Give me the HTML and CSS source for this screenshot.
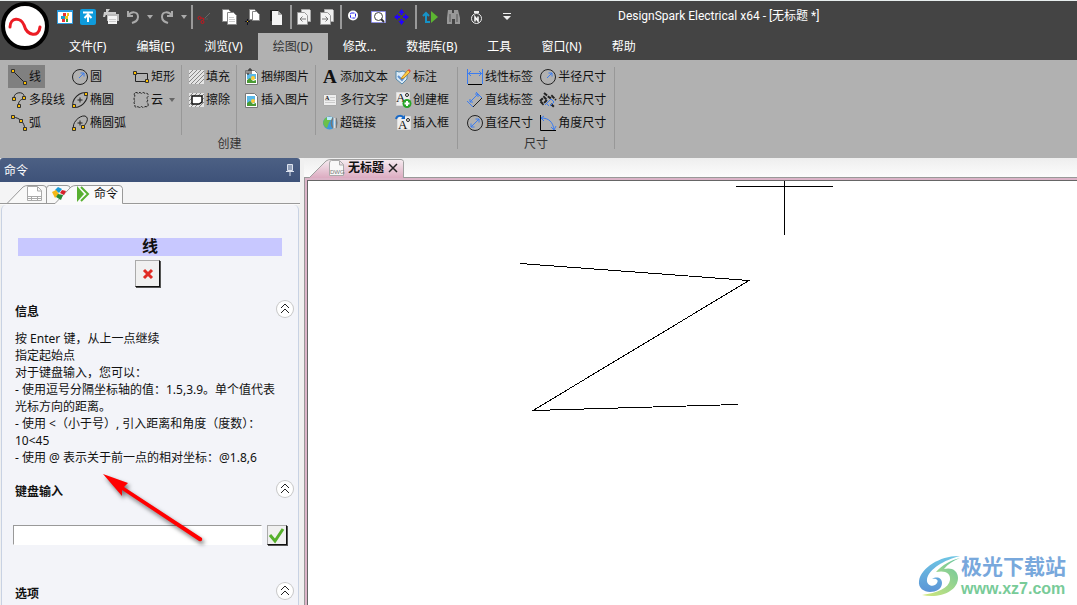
FILE: index.html
```html
<!DOCTYPE html>
<html lang="zh-CN">
<head>
<meta charset="utf-8">
<title>DesignSpark Electrical x64</title>
<link rel="stylesheet" href="styles.css">
</head>
<body>
<div class="app">
<header class="header">
  <button class="logo" aria-label="DesignSpark">
    <svg width="50" height="50" viewBox="0 0 50 50"><circle cx="25" cy="25" r="22" fill="#fff" stroke="#000" stroke-width="4"/><path d="M10 26C10 16 21 16 24 24C27 35 39 37 40 26" fill="none" stroke="#ec1c24" stroke-width="3" stroke-linecap="round"/></svg>
  </button>
  <div class="header-rows">
    <div class="quick">
      <div class="quick-group">
        <button class="tool" aria-label="项目"><svg viewBox="0 0 16 16"><path fill="#fff" stroke="#2a9be0" d="M.5 1.500h15v13H.5z"/><path fill="#2a9be0" d="M0 1h16v2H0z"/><path fill="#e33" d="M6 4h3v3H6zM5 10h3v3H5z"/><path fill="#18a0d0" d="M4 7h4v3H4z"/><path fill="#f5c518" d="M8 7h3v3H8zM10 4h2v3h-2z"/><path fill="#36a436" d="M9 10h2v3H9z"/></svg></button>
        <button class="tool" aria-label="上传"><svg viewBox="0 0 16 16"><rect width="16" height="16" rx="2" fill="#0f9bdc"/><path d="M3 3.500h10M8 13V7M4.500 9 8 5.500 11.500 9" fill="none" stroke="#fff" stroke-width="2"/></svg></button>
        <button class="tool" aria-label="打印"><svg viewBox="0 0 16 16"><path fill="#ccc" d="M3 0h4L5 3h8v3H3zM1 3h3L2 8H0z"/><path fill="#bbb" d="M4 5h12v7H4z"/><path fill="#f4f4f4" d="M5 7h9v8H5z"/><path stroke="#ccc" d="M6 10.500h7M6 12.500h7"/></svg></button>
        <button class="tool tool-undo" aria-label="撤销"><svg viewBox="0 0 14 16"><path fill="none" stroke="#aaa" stroke-width="2" d="M2 2v5h5M2 7c3-5 10-5 10 1 0 4-3 5-6 6"/></svg></button>
        <button class="tool tool-caret" aria-label="撤销列表"><svg viewBox="0 0 6 4"><path fill="#aaa" d="M0 0h6L3 4z"/></svg></button>
        <button class="tool tool-undo" aria-label="重做"><svg viewBox="0 0 14 16"><path fill="none" stroke="#aaa" stroke-width="2" d="M12 2v5H7M12 7C9 2 2 2 2 8c0 4 3 5 6 6"/></svg></button>
        <button class="tool tool-caret" aria-label="重做列表"><svg viewBox="0 0 6 4"><path fill="#aaa" d="M0 0h6L3 4z"/></svg></button>
      </div>
      <div class="quick-group quick-wide">
        <button class="tool" aria-label="剪切"><svg viewBox="0 0 16 16"><path d="m7 9 5-5" stroke="#666"/><path d="M6 10h4" stroke="#555"/><g fill="none" stroke="#c8141c"><circle cx="1.500" cy="9" r="1.500"/><circle cx="4.500" cy="13" r="1.500"/><path d="m3 9 3 .5-1 2"/></g></svg></button>
        <button class="tool" aria-label="复制"><svg viewBox="0 0 16 16"><path fill="#fff" stroke="#888" d="M.5.500h6l3 3v9h-9z"/><path fill="#fff" stroke="#888" d="M5.500 3.500h6l3 3v9h-9z"/><path d="M7 8.500h5M7 10.500h6M7 12.500h6" stroke="#ccc"/></svg></button>
        <button class="tool" aria-label="带基点复制"><svg viewBox="0 0 16 16"><path fill="#fff" stroke="#888" d="M3.500.500h5l3 3v7h-8z"/><path fill="#fff" stroke="#888" d="M6.500 2.500h4l3 3v6h-7z"/><path d="M1.500 10v6M-1 12.500h5" stroke="#112"/><path fill="#fc0" d="M1 12h1v1H1z"/></svg></button>
        <button class="tool" aria-label="粘贴"><svg viewBox="0 0 16 16"><path fill="#222" d="M0 1h8v2H2v9H0z"/><path fill="#f4f4f4" d="M2 2h6l4 4v10H2z"/><path fill="#aaa" d="m8 2 4 4H8z"/></svg></button>
      </div>
      <div class="quick-group">
        <button class="tool" aria-label="上一页"><svg viewBox="0 0 16 16"><path fill="#eee" stroke="#aaa" d="M4.500.500h8l1 1v11h-9z"/><path fill="#f4f4f4" stroke="#999" d="M.5 3.500h7l3 3v9H.5z"/><path fill="none" stroke="#777" d="M9 10H3M5.500 7.500 3 10l2.500 2.500"/></svg></button>
        <button class="tool" aria-label="下一页"><svg viewBox="0 0 16 16"><path fill="#eee" stroke="#aaa" d="M4.500.500h8l1 1v11h-9z"/><path fill="#f4f4f4" stroke="#999" d="M.5 3.500h7l3 3v9H.5z"/><path fill="none" stroke="#777" d="M2 10h6M5.500 7.500 8 10l-2.500 2.500"/></svg></button>
      </div>
      <div class="quick-group quick-wide">
        <button class="tool" aria-label="缩放"><svg viewBox="0 0 16 16"><circle cx="6" cy="6.500" r="5" fill="#fff"/><rect x="3.500" y="4" width="5" height="5" rx="1" fill="none" stroke="#22e" stroke-dasharray="3 1"/></svg></button>
        <button class="tool" aria-label="窗口缩放"><svg viewBox="0 0 16 16"><path fill="#fff" stroke="#88f" stroke-dasharray="2 1" d="M.5 2.500h14v11H.5z"/><circle cx="7.500" cy="7.500" r="4" fill="none" stroke="#444"/><path d="m10 10 3 3" stroke="#333" stroke-width="2"/></svg></button>
        <button class="tool" aria-label="平移"><svg viewBox="0 0 16 16"><path fill="#20f" d="m6.500 0 3 4h-6zm0 16 3-4h-6zM-1 8l4-3v6zm15 0-4-3v6z"/><path d="M6.500 4v2m0 4v2M3 8h2m3 0h2" stroke="#20f" stroke-width="2"/></svg></button>
      </div>
      <div class="quick-group quick-wide">
        <button class="tool" aria-label="更新"><svg viewBox="0 0 16 16"><path fill="none" stroke="#1693c8" stroke-width="2" d="M8 13H4V4M1 7l3-3 3 3"/><path fill="#5cb531" d="m9 2 7 6-7 6z"/></svg></button>
        <button class="tool" aria-label="查找"><svg viewBox="0 0 16 16"><path fill="#999" d="M2 1h4v3h2V1h4l2 8v6H9v-5H6v5H1V9z"/><path fill="#777" d="M3 5h2v8H3zM10 5h2v8h-2z"/></svg></button>
        <button class="tool" aria-label="标记"><svg viewBox="0 0 16 16"><circle cx="6.500" cy="9.500" r="5" fill="#444" stroke="#eee"/><path fill="#eee" d="M4 2h5v2H4z"/><path d="M5 12.500V8l3 4V7.500" fill="none" stroke="#fff" stroke-width="1.500"/></svg></button>
        <button class="tool tool-more" aria-label="自定义"><svg viewBox="0 0 10 8"><path fill="#eee" d="M1 0h8v1H1zM1 3h8L5 7z"/></svg></button>
      </div>
      <h1 class="title">DesignSpark Electrical x64 - [无标题 *]</h1>
    </div>
    <nav class="menu">
      <button class="menu-item">文件(F)</button>
      <button class="menu-item">编辑(E)</button>
      <button class="menu-item">浏览(V)</button>
      <button class="menu-item active">绘图(D)</button>
      <button class="menu-item">修改...</button>
      <button class="menu-item">数据库(B)</button>
      <button class="menu-item">工具</button>
      <button class="menu-item">窗口(N)</button>
      <button class="menu-item">帮助</button>
    </nav>
  </div>
</header>

<section class="ribbon">
  <div class="group">
    <div class="group-body">
      <div class="col">
        <button class="cmd selected"><svg class="icon" viewBox="0 0 18 18"><path class="k" d="m3 3 12 12"/><path class="dot" d="M1.500 1.500h3v3h-3zM13.500 13.500h3v3h-3z"/></svg>线</button>
        <button class="cmd"><svg class="icon" viewBox="0 0 18 18"><path class="k" d="M4 8C3 0 15 0 14 6c-1 3-7 3-5 9"/><path class="dot" d="M2.500 6.500h3v3h-3zM12.500 5.500h3v3h-3zM7.500 13.500h3v3h-3z"/></svg>多段线</button>
        <button class="cmd"><svg class="icon" viewBox="0 0 18 18"><path class="k" d="M3 3c7 1 11 5 12 12"/><path class="dot" d="M1.500 1.500h3v3h-3zM9.500 5.500h3v3h-3zM13.500 13.500h3v3h-3z"/></svg>弧</button>
      </div>
      <div class="col">
        <button class="cmd"><svg class="icon" viewBox="0 0 18 18"><circle class="k" cx="9" cy="9" r="7.500"/><path class="b" d="m8 10 5-5M9.500 5H13v3.500"/></svg>圆</button>
        <button class="cmd"><svg class="icon" viewBox="0 0 18 18"><ellipse class="k" cx="9" cy="9" rx="9" ry="5" transform="rotate(-45 9 9)"/><path class="k" d="M9 6.500v5M6.500 9h5"/><path class="dot" d="M1.500 13.500h3v3h-3zM13.500 1.500h3v3h-3z"/></svg>椭圆</button>
        <button class="cmd"><svg class="icon" viewBox="0 0 18 18"><path class="k" d="M3 15C0 10 8 1 14 2c5 2 1 8-2 11M9 6.500v5M6.500 9h5"/><path class="dot" d="M1.500 13.500h3v3h-3zM10.500 11.500h3v3h-3z"/></svg>椭圆弧</button>
      </div>
      <div class="col">
        <button class="cmd"><svg class="icon" viewBox="0 0 18 18"><path class="k" d="M3.500 5.500h12v8h-12z"/><path class="dot" d="M1.500 3.500h3v3h-3zM13.500 11.500h3v3h-3z"/></svg>矩形</button>
        <button class="cmd"><svg class="icon" viewBox="0 0 18 18"><path class="k" d="M3 5q-2-3 1-3.500 2 0 2 1 1.500-2 3.500 0 2-2 3.500 0 4-1 3 3-2 1.500 0 3.500-2 2 0 3.500 1 4-3 3-1.500 2-3.500 0-2 2-3.500 0-4 2-3-2-2-1.500 0-3.500-2-2 0-5z" stroke-dasharray="3 1"/></svg>云<svg class="drop" viewBox="0 0 6 4"><path fill="#666" d="M0 0h6L3 4z"/></svg></button>
      </div>
      <div class="rule"></div>
      <div class="col">
        <button class="cmd"><svg class="icon" viewBox="0 0 18 18"><path fill="#e4e4e4" d="M2 2h15v14H2z"/><path class="g" d="m2 6 4-4M2 10l8-8M2 14l12-12M4 16 17 3M8 16l9-9M12 16l5-5"/></svg>填充</button>
        <button class="cmd"><svg class="icon" viewBox="0 0 18 18"><path fill="#e4e4e4" d="M2 2h15v14H2z"/><path class="g" d="m2 6 4-4M2 10l8-8M2 14l12-12M4 16 17 3M8 16l9-9M12 16l5-5"/><path fill="#fff" stroke="#111" stroke-width="1.500" d="M5 5h10v6l-3 2H5z"/></svg>擦除</button>
      </div>
      <div class="rule"></div>
      <div class="col">
        <button class="cmd"><svg class="icon" viewBox="0 0 18 18"><path fill="#fff" stroke="#777" d="M3.500 2.500h9l3 3v11h-12z"/><path fill="#5ab9e8" d="M5 6h9v5H5z"/><path fill="#4a9b35" d="m5 12 3-2 3 3 3-1v3H5z"/><circle cx="11" cy="10" r="2" fill="#fc3"/><path class="k" d="M5 3v3h2V1h2v5"/></svg>捆绑图片</button>
        <button class="cmd"><svg class="icon" viewBox="0 0 18 18"><path fill="#fff" stroke="#777" d="M3.500 2.500h9l3 3v11h-12z"/><path fill="#5ab9e8" d="M5 5h8v7H5z"/><path fill="#4a9b35" d="m5 12 3-2 3 3 3-1v3H5z"/><circle cx="11" cy="10" r="2" fill="#fc3"/></svg>插入图片</button>
      </div>
      <div class="rule"></div>
      <div class="col">
        <button class="cmd"><svg class="icon" viewBox="0 0 18 18"><text class="serif heavy" x="2" y="15" font-size="19">A</text></svg>添加文本</button>
        <button class="cmd"><svg class="icon" viewBox="0 0 18 18"><path fill="#eee" stroke="#aaa" d="M2.500 3.500h13v11h-13z"/><path stroke="#ccc" d="M9 6.500h5M4 9.500h10M4 11.500h10"/><text class="serif heavy" x="4" y="9" font-size="6">A</text></svg>多行文字</button>
        <button class="cmd"><svg class="icon" viewBox="0 0 18 18"><circle cx="8.500" cy="9" r="6.500" fill="#3c98dc"/><path fill="#6bc04a" d="M3 6c3-5 8-2 6 1s-2 5-3 7C3 13 1 9 3 6z"/><path fill="#b9e9f8" d="M6 3h5v3H6z"/><path d="M12 4c-2 3-2 7 0 10M15 4c1 3 1 7 0 10" fill="none" stroke="#777" stroke-width="1.500"/><path d="M13.500 4v10" stroke="#ddd" stroke-width="2"/></svg>超链接</button>
      </div>
      <div class="col">
        <button class="cmd"><svg class="icon" viewBox="0 0 18 18"><path fill="#dcecf8" stroke="#58a" d="m2 3 3 1 4-1 4 2v6l-5 5-6-5z"/><path d="m4 8 4 4 4-5" fill="none" stroke="#5f92d0" stroke-width="2"/><path fill="#fc4" stroke="#a60" stroke-width=".6" d="m8 9 6-7 2 2-6 6-3 1z"/><path fill="#e44" d="m14 2 1-1 2 2-1 1z"/></svg>标注</button>
        <button class="cmd"><svg class="icon" viewBox="0 0 18 18"><path fill="#eee" stroke="#ddd" d="M2.500 1.500h13v13h-13z"/><text class="serif" x="2" y="11" font-size="13">A</text><circle cx="13" cy="4" r="1.500" class="k"/><circle cx="13" cy="12.500" r="4.500" fill="#27a527"/><path d="M13 10v5M10.500 12.500h5" stroke="#fff" stroke-width="2"/></svg>创建框</button>
        <button class="cmd"><svg class="icon" viewBox="0 0 18 18"><path fill="#eee" stroke="#ddd" d="M3.500 2.500h13v13h-13z"/><text class="serif" x="4" y="15" font-size="13">A</text><circle cx="14" cy="6" r="1.500" class="k"/><path d="M2 5c1-4 6-4 8-1" fill="none" stroke="#1668c7" stroke-width="2"/><path fill="#1668c7" d="M7 5h4V1z"/></svg>插入框</button>
      </div>
    </div>
    <h2 class="group-name">创建</h2>
  </div>
  <div class="rule tall"></div>
  <div class="group">
    <div class="group-body">
      <div class="col">
        <button class="cmd"><svg class="icon" viewBox="0 0 18 18"><path class="b" d="M1.500 1v15M16.500 1v15M2 5.500h14M5 3 2.500 5.500 5 8M13 3l2.500 2.500L13 8"/><path stroke="#000" d="M2 16.500h14"/></svg>线性标签</button>
        <button class="cmd"><svg class="icon" viewBox="0 0 18 18"><path class="b" d="m1 10 6 6M10 1l6 6M4 11l8-8M4 8v3h3M9 3h3v3"/><path class="k" d="m7 16 9-9"/></svg>直线标签</button>
        <button class="cmd"><svg class="icon" viewBox="0 0 18 18"><circle class="k" cx="9" cy="9" r="7.500"/><path class="b" d="m5 13 8-8M9.500 5H13v3.500M5 9.500V13h3.500"/></svg>直径尺寸</button>
      </div>
      <div class="col">
        <button class="cmd"><svg class="icon" viewBox="0 0 18 18"><circle class="k" cx="9" cy="9" r="7.500"/><path class="b" d="m8 10 5-5M9.500 5H13v3.500"/></svg>半径尺寸</button>
        <button class="cmd"><svg class="icon" viewBox="0 0 18 18"><path class="k heavy-line" stroke-dasharray="4 1" d="m5 2 6 5 2-2 4 4M1 10l4-4 3 3-4 4zM12 13l3 3"/><path class="b" d="m6 14 6-6 3 3-4 4M7 12l3 3"/></svg>坐标尺寸</button>
        <button class="cmd"><svg class="icon" viewBox="0 0 18 18"><path stroke="#000" fill="none" d="M1.500 1v15.500H17"/><path class="b" d="M2 4c8 0 12 4 13 12M5 2 2 4l3 3M12 13l3 3 2-4"/></svg>角度尺寸</button>
      </div>
    </div>
    <h2 class="group-name">尺寸</h2>
  </div>
  <div class="rule tall"></div>
</section>

<main class="work">
  <aside class="panel">
    <div class="panel-title"><h2>命令</h2>
      <button class="pin" aria-label="固定"><svg width="10" height="14" viewBox="0 0 10 14"><path fill="#93a1ba" stroke="#dde3ee" d="M2.500 1.500h5v6h-5z"/><path stroke="#dde3ee" d="M1 8.500h8M5 9v4"/></svg></button>
    </div>
    <div class="tabs">
      <svg class="tabs-shape" width="300" height="23" viewBox="0 0 300 23"><g fill="#f8f8f8" stroke="#999"><path d="M7 21.500 23 5q2-1.500 5-1.500h15q3 0 3.500 3v15zM46.500 21.500v-15q0-3 3-3H67q3 0 3.500 3v15z"/><path fill="#fafafb" d="M-2 21.500h57L71 5q2-1.500 5-1.500h43q3 0 3.500 3v15H302V26H-2z"/></g></svg>
      <button class="tab tab-page" aria-label="页面"><svg width="17" height="17" viewBox="0 0 17 17"><path fill="#fff" stroke="#aaa" d="M1.500 1.500h10l4 4v10h-14zM11.500 2v4h4M1 11.500h15M5.500 11v4M11.500 11v4M1 13.500h15"/></svg></button>
      <button class="tab tab-color" aria-label="属性"><svg width="15" height="15" viewBox="0 0 15 15"><path fill="#189ad6" d="m7 1 4 2-3 4-4-3z"/><path fill="#f5b818" d="m1 6 4-2 3 4-4 4z"/><path fill="#d8202a" d="m11 4 4 1-2 4-4-2z"/><path fill="#288b36" d="m7 8 5 1-2 5-5-3z"/></svg></button>
      <button class="tab tab-command"><svg width="14" height="16" viewBox="0 0 14 16"><path fill="#58b031" d="M1 0v16l7-8z"/><path fill="none" stroke="#58b031" stroke-width="2" d="m5 1 7 7-7 7"/></svg>命令</button>
    </div>
    <div class="panel-body">
      <h3 class="command-name">线</h3>
      <button class="square cancel" aria-label="取消"><svg width="12" height="12" viewBox="0 0 12 12"><path d="m2 2 8 8m0-8-8 8" stroke="#e02b24" stroke-width="3"/></svg></button>
      <section class="info">
        <div class="section-head"><h3>信息</h3><button class="fold" aria-label="折叠"><svg width="16" height="16" viewBox="0 0 16 16"><path d="m4 7 4-4 4 4M4 12l4-4 4 4"/></svg></button></div>
        <p class="help">按 Enter 键，从上一点继续<br>指定起始点<br>对于键盘输入，您可以：<br>- 使用逗号分隔坐标轴的值：1.5,3.9。单个值代表<br>光标方向的距离。<br>- 使用 &lt;（小于号）, 引入距离和角度（度数）：<br>10&lt;45<br>- 使用 @ 表示关于前一点的相对坐标：@1.8,6</p>
      </section>
      <section class="keyboard">
        <div class="section-head"><h3><label for="entry">键盘输入</label></h3><button class="fold" aria-label="折叠"><svg width="16" height="16" viewBox="0 0 16 16"><path d="m4 7 4-4 4 4M4 12l4-4 4 4"/></svg></button></div>
        <div class="entry-row"><input id="entry" type="text"><button class="square accept" aria-label="确定"><svg width="18" height="18" viewBox="0 0 18 18"><path d="m2 9 5 6 8-12" fill="none" stroke="#55b02b" stroke-width="3"/></svg></button></div>
      </section>
      <section>
        <div class="section-head"><h3>选项</h3><button class="fold" aria-label="折叠"><svg width="16" height="16" viewBox="0 0 16 16"><path d="m4 7 4-4 4 4M4 12l4-4 4 4"/></svg></button></div>
      </section>
    </div>
    <svg class="arrow" width="120" height="90" viewBox="0 0 120 90"><path d="M2 2 27 11 23 15 101 66Q102 70 98 69L21 18V24z" fill="#f00"/></svg>
  </aside>

  <section class="document">
    <div class="doc-tabs">
      <button class="doc-tab">
        <svg class="doc-shape" width="96" height="20" viewBox="0 0 96 20"><defs><linearGradient id="pink" x2="0" y2="1"><stop stop-color="#f6ecf0"/><stop offset="1" stop-color="#dcabc1"/></linearGradient></defs><path fill="url(#pink)" stroke="#a0a0a0" d="M1 20 18 3q2-1.500 5-1.500h70q2 0 2.500 2V20"/></svg>
        <svg width="16" height="16" viewBox="0 0 16 16"><path fill="#f8f8f8" stroke="#aaa" d="M1.500 3q0-2.500 2-2.500h8l4 4v11h-14zM11.500 1v4h4"/><text x="2" y="14" class="dwg">DWG</text></svg>
        <span>无标题</span>
        <svg width="10" height="10" viewBox="0 0 10 10"><path d="m1 1 8 8m0-8L1 9" stroke="#222" stroke-width="1.500"/></svg>
      </button>
    </div>
    <div class="frame">
      <div class="canvas">
        <svg class="drawing" width="560" height="260" viewBox="0 0 560 260"><path shape-rendering="crispEdges" fill="none" stroke="#000" d="m212 82.500 229 17L225 229.500l205-6M428 5.500h97M476.500 0v54"/></svg>
        <a class="mark" href="#site">
          <svg width="46" height="46" viewBox="0 0 46 46"><defs><linearGradient id="sky" x2="0" y2="1"><stop stop-color="#6fc6e4"/><stop offset="1" stop-color="#5c95d6"/></linearGradient><linearGradient id="leaf" x1="1" x2="0" y2="1"><stop stop-color="#66c4a0"/><stop offset="1" stop-color="#d4e87a"/></linearGradient></defs><path fill="url(#sky)" d="M43 3C25 2 4 14 2 28c-1 7 5 11 11 11 6 0 12-3 12-9 0-5-5-7-10-4 4-1 7 1 5 4-3 5-11 3-10-4C12 16 27 7 43 3z"/><path fill="url(#leaf)" d="M43 5C34 7 25 12 19 19c9-2 15 1 14 8-1 8-13 13-28 15 18 4 36-4 36-17 0-8-7-11-14-9 4-5 9-8 16-11z"/></svg>
          <span class="mark-text"><span class="mark-name">极光下载站</span><span class="mark-url">www.xz7.com</span></span>
        </a>
      </div>
    </div>
  </section>
</main>
</div>
</body>
</html>
```
FILE: styles.css
```css
* { box-sizing: border-box; }
body {
  margin: 0;
  font: 12px/17px "Noto Sans", "Noto Sans CJK SC", sans-serif;
  color: #111;
}
h1, h2, h3, p { margin: 0; font: inherit; }
button {
  margin: 0;
  padding: 0;
  border: 0;
  background: none;
  font: inherit;
  color: inherit;
  white-space: nowrap;
}
svg { display: block; flex: none; overflow: visible; }
.app { height: 100vh; display: flex; flex-direction: column; overflow: hidden; }

.header {
  display: flex;
  background: #444;
  border-top: 1px solid #e8eeee;
  color: #fff;
}
.logo { width: 50px; height: 50px; }
.header-rows { flex: 1; min-width: 0; }
.quick { display: flex; align-items: center; height: 31px; padding-left: 7px; }
.quick-group { display: flex; align-items: center; gap: 7px; }
.quick-group + .quick-group { border-left: 2px solid #999; margin-left: 4px; padding-left: 5px; height: 24px; }
.quick-group.quick-wide { gap: 8px; }
.tool svg { width: 16px; height: 16px; }
.tool-undo svg { width: 14px; height: 16px; }
.tool-caret svg { width: 6px; height: 4px; }
.tool-more { padding-left: 8px; }
.tool-more svg { width: 10px; height: 8px; }
.title { margin-left: 106px; font: 12px/17px Roboto, "Noto Sans CJK SC", sans-serif; white-space: nowrap; }
.menu { display: flex; padding: 1px 0 0 4px; }
.menu-item { height: 27px; padding: 0 15px; }
.menu-item.active { background: #b1b1b1; color: #333; }

.ribbon { display: flex; height: 98px; padding: 5px 8px 4px; background: #b1b1b1; }
.group { display: flex; flex-direction: column; }
.group-body { display: flex; gap: 2px; height: 70px; }
.group-name { text-align: center; color: #333; }
.col { display: flex; flex-direction: column; align-items: flex-start; }
.cmd { display: flex; align-items: center; gap: 1px; height: 23px; padding: 0 2px; }
.cmd.selected { background: #808080; padding-right: 4px; }
.icon { width: 18px; height: 18px; }
.drop { width: 6px; height: 4px; margin-left: 5px; }
.rule { width: 1px; margin: 0 1px 0 2px; background: #989898; }
.rule.tall { margin: 2px 6px 5px; }
.k { fill: none; stroke: #222; }
.heavy-line { stroke-width: 2px; }
.b { fill: none; stroke: #3b7cf0; }
.g { fill: none; stroke: #888; }
.dot { fill: #ffc000; stroke: #333; stroke-width: 1px; }
.serif { font-family: "Liberation Serif", serif; fill: #111; }
.heavy { font-weight: bold; }

.work { flex: 1; display: flex; min-height: 0; background: #f0f0f0; }
.panel { position: relative; width: 300px; display: flex; flex-direction: column; }
.panel-title {
  display: flex;
  align-items: center;
  justify-content: space-between;
  height: 24px;
  padding: 0 5px 0 4px;
  background: linear-gradient(#4c6084, #3e5279);
  border-radius: 3px 3px 0 0;
  color: #fff;
}
.tabs { position: relative; display: flex; align-items: center; height: 23px; background: #f4f4f5; }
.tabs-shape { position: absolute; inset: 0; overflow: hidden; }
.tab { position: relative; }
.tab-page { margin-left: 26px; }
.tab-color { margin-left: 8px; }
.tab-command { display: flex; align-items: center; gap: 4px; margin-left: 10px; }
.panel-body {
  flex: 1;
  min-height: 0;
  margin: 0 1px;
  padding: 33px 12px 0 13px;
  overflow: hidden;
  background: #f3f4f9;
  border: solid #c8d2e3;
  border-width: 0 1px;
  border-radius: 5px 5px 0 0;
}
.command-name {
  margin: 0 4px 0 3px;
  height: 18px;
  background: #c8c8ff;
  font-size: 16px;
  font-weight: bold;
  line-height: 16px;
  text-align: center;
}
.square {
  display: grid;
  place-items: center;
  background: #f0f0f0;
  border: 1px solid;
  border-color: #aaa #111 #111 #aaa;
  box-shadow: 1px 1px 0 #555;
}
.cancel { width: 25px; height: 27px; margin: 4px 0 12px 120px; }
.section-head { display: flex; justify-content: space-between; align-items: flex-start; margin-right: -7px; }
.section-head h3 { font-weight: bold; padding-top: 4px; }
.fold {
  width: 16px;
  height: 16px;
  margin-top: 2px;
  border-radius: 50%;
  background: #fff;
  box-shadow: 0 0 0 1px #c8c8c8;
}
.fold path { fill: none; stroke: #222; stroke-width: 1px; }
.info { height: 180px; }
.help { padding-top: 10px; white-space: nowrap; }
.keyboard { height: 102px; }
.entry-row { display: flex; justify-content: space-between; margin: 25px -1px 0 -2px; }
.entry-row input {
  width: 249px;
  height: 20px;
  border: 1px solid #fff;
  border-color: #999 #fff #fff #999;
  font: inherit;
}
.accept { width: 20px; height: 20px; }
.arrow { position: absolute; left: 101px; top: 314px; filter: drop-shadow(2px 3px 2px #0008); pointer-events: none; }

.document { flex: 1; min-width: 0; display: flex; flex-direction: column; margin-left: 4px; }
.doc-tabs { height: 19px; background: linear-gradient(#eee, #fcfcfc); padding-left: 4px; }
.doc-tab { position: relative; display: flex; align-items: center; gap: 4px; height: 19px; padding-left: 20px; font-weight: bold; }
.doc-shape { position: absolute; left: 0; top: 0; }
.doc-tab > :not(.doc-shape) { position: relative; }
.dwg { font: 6px "Liberation Sans", sans-serif; fill: #777; }
.frame {
  flex: 1;
  display: flex;
  padding: 2px 0 0 2px;
  background: #dcb4c8;
  border: solid #999;
  border-width: 1px 0 0 1px;
}
.canvas { position: relative; flex: 1; overflow: hidden; background: #fff; border: solid #666; border-width: 1px 0 0 1px; }
.drawing { position: absolute; left: 0; top: 0; }
.mark { position: absolute; right: 11px; bottom: 6px; display: flex; align-items: center; text-decoration: none; }
.mark > svg { margin-right: -2px; }
.mark-text { display: flex; flex-direction: column; }
.mark-name { font: bold 21px/26px "Liberation Sans", "Noto Sans CJK SC", sans-serif; color: #78a8dc; }
.mark-url { font: bold 16px/18px "Liberation Sans", sans-serif; color: #78cb98; }
```
